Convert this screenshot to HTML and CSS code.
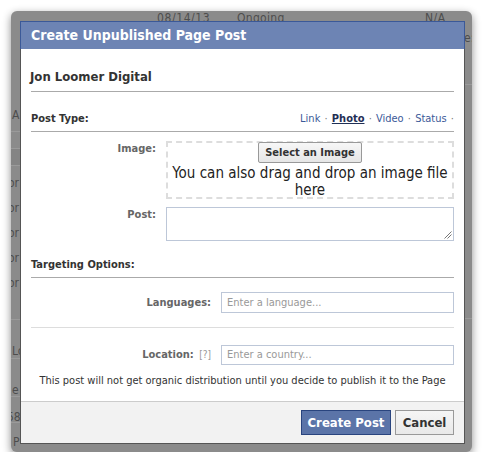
FILE: index.html
```html
<!DOCTYPE html>
<html>
<head>
<meta charset="utf-8">
<link rel="stylesheet" href="styles.css">
</head>
<body>
<div class="frame">
  <div class="behind">
    <div class="bg-line l1"></div>
    <div class="bg-line l2"></div>
    <div class="bg-band"></div>
    <div class="bg-line l3"></div>
    <div class="bg-line l4"></div>
    <div class="bg-line l5"></div>
    <div class="bg-line l6"></div>
    <div class="bg-line l7"></div>
    <div class="bg-line r1"></div>
    <div class="bg-line r2"></div>
    <span class="bg-t t1">08/14/13</span>
    <span class="bg-t t2">Ongoing</span>
    <span class="bg-t t3">N/A</span>
    <span class="bg-t t4">A</span>
    <span class="bg-t t5">or</span>
    <span class="bg-t t6">or</span>
    <span class="bg-t t7">or</span>
    <span class="bg-t t8">or</span>
    <span class="bg-t t9">or</span>
    <span class="bg-t t10">Lo</span>
    <span class="bg-t t11">e</span>
    <span class="bg-t t12">58</span>
    <span class="bg-t t13">P</span>
    <span class="bg-t t14">e:</span>
  </div>
  <div class="dialog">
    <div class="header">Create Unpublished Page Post</div>
    <div class="body">
      <div class="page-name">Jon Loomer Digital</div>
      <div class="section-head">
        <span>Post Type:</span>
        <span class="types"><a class="lnk">Link</a> <span class="dot">·</span> <a class="lnk cur">Photo</a> <span class="dot">·</span> <a class="lnk">Video</a> <span class="dot">·</span> <a class="lnk">Status</a> <span class="dot">·</span></span>
      </div>
      <div class="row row-image">
        <div class="label">Image:</div>
        <div class="drop">
          <button class="btn-select">Select an Image</button>
          <div class="drop-text">You can also drag and drop an image file here</div>
        </div>
      </div>
      <div class="row row-post">
        <div class="label">Post:</div>
        <div class="textarea"><svg class="grip" width="8" height="8" viewBox="0 0 8 8"><path d="M7.5 0.5L0.5 7.5M7.5 3.5L3.5 7.5" stroke="#777" stroke-width="1"/></svg></div>
      </div>
      <div class="section-head targeting"><span>Targeting Options:</span></div>
      <div class="row row-lang">
        <div class="label wide">Languages:</div>
        <div class="input">Enter a language...</div>
      </div>
      <div class="divider"></div>
      <div class="row row-loc">
        <div class="label wide">Location: <span class="help">[?]</span></div>
        <div class="input">Enter a country...</div>
      </div>
      <div class="note">This post will not get organic distribution until you decide to publish it to the Page</div>
    </div>
    <div class="footer">
      <button class="btn btn-primary">Create Post</button>
      <button class="btn btn-cancel">Cancel</button>
    </div>
  </div>
</div>
</body>
</html>
```
FILE: styles.css
```css
* { box-sizing: border-box; }
html, body { margin: 0; padding: 0; background: #fff; }
body { font-family: "DejaVu Sans Condensed", "DejaVu Sans", Verdana, sans-serif; color: #333; }

.frame {
  position: relative;
  margin: 11px 0 0 11px;
  width: 461px;
  height: 441px;
  background: #8b8b8b;
  border-radius: 6px;
  box-shadow: 0 3px 8px rgba(0,0,0,0.45);
  padding: 10px 7px 8px 9px;
}
.behind { position: absolute; inset: 0; overflow: hidden; border-radius: 6px; }
.bg-t { position: absolute; font-size: 12px; color: #4d4d4d; line-height: 12px; white-space: nowrap; }
.t1 { left: 146px; top: 1px; letter-spacing: 0.6px; }
.t2 { left: 226px; top: 1px; letter-spacing: 0.3px; }
.t3 { left: 414px; top: 1px; letter-spacing: 0.5px; }
.t4 { left: 1px; top: 98px; }
.t5 { left: -3px; top: 166px; }
.t6 { left: -3px; top: 191px; }
.t7 { left: -3px; top: 216px; }
.t8 { left: -3px; top: 241px; }
.t9 { left: -3px; top: 266px; }
.t10 { left: 1px; top: 334px; }
.t11 { left: 1px; top: 373px; }
.t12 { left: -4px; top: 400px; }
.t13 { left: 2px; top: 425px; }
.t14 { left: 453px; top: 21px; }
.bg-line { position: absolute; height: 1px; background: #9a9a9a; }
.l1 { left: 0; width: 10px; top: 120px; }
.l2 { left: 0; width: 10px; top: 137px; }
.bg-band { position: absolute; left: 0; width: 10px; top: 138px; height: 17px; background: #848484; }
.l3 { left: 0; width: 10px; top: 154px; }
.l4 { left: 0; width: 10px; top: 308px; }
.l5 { left: 0; width: 10px; top: 347px; }
.l6 { left: 0; width: 10px; top: 385px; }
.l7 { left: 0; width: 10px; top: 411px; }
.r1 { right: 0; width: 8px; top: 73px; }
.r2 { right: 0; width: 8px; top: 307px; }

.dialog {
  position: relative;
  width: 445px;
  height: 423px;
  border: 1px solid #555;
  border-top: none;
  background: #fff;
  display: flex;
  flex-direction: column;
}
.header {
  height: 28px;
  margin: 0 -1px;
  background: #6d84b4;
  border: 1px solid #3b5998;
  border-bottom: none;
  color: #fff;
  font-weight: bold;
  font-size: 14px;
  line-height: 27px;
  padding-left: 10px;
  white-space: nowrap;
}
.body { flex: 1; padding: 0 10px 0 10px; }

.page-name {
  margin-top: 20px;
  font-size: 13px;
  font-weight: bold;
  line-height: 16px;
  padding-bottom: 6px;
  border-bottom: 1px solid #aaa;
  text-indent: -1px;
}
.section-head {
  margin-top: 20px;
  display: flex;
  justify-content: space-between;
  font-size: 11px;
  font-weight: bold;
  line-height: 14px;
  padding-bottom: 5px;
  border-bottom: 1px solid #aaa;
}
.types { font-weight: normal; word-spacing: 1px; }
.lnk { color: #3b5998; }
.lnk.cur { font-weight: bold; text-decoration: underline; color: #1f2f55; }
.dot { color: #777; }

.row { display: flex; gap: 10px; }
.label {
  width: 125px;
  flex: none;
  text-align: right;
  font-size: 11px;
  font-weight: bold;
  color: #666;
  line-height: 14px;
  white-space: nowrap;
}
.label.wide { width: 180px; }
.help { font-weight: normal; color: #999; font-size: 10px; margin-left: 2px; }

.row-image { margin-top: 9px; }
.row-image .label { padding-top: 1px; }
.drop {
  flex: 1;
  height: 58px;
  border: 2px dashed #ddd;
  text-align: center;
}
.btn-select {
  display: block;
  margin: -1px auto 0;
  height: 21px;
  padding: 0 6px;
  font-family: inherit;
  font-size: 11px;
  font-weight: bold;
  color: #333;
  background: linear-gradient(#f7f7f7, #e6e6e6);
  border: 1px solid #999;
  border-radius: 2px;
  white-space: nowrap;
}
.drop-text { font-size: 15px; line-height: 17px; color: #222; margin-top: 2px; padding: 0 2px; }

.row-post { margin-top: 8px; }
.row-post .label { padding-top: 1px; }
.textarea {
  position: relative;
  flex: 1;
  height: 34px;
  border: 1px solid #bdc7d8;
}
.grip { position: absolute; right: 1px; bottom: 1px; }

.targeting { margin-top: 17px; }

.row-lang { margin-top: 14px; align-items: center; }
.input {
  flex: 1;
  height: 21px;
  border: 1px solid #bdc7d8;
  font-size: 11px;
  color: #999;
  line-height: 19px;
  padding-left: 5px;
}
.row-loc .input { height: 20px; line-height: 18px; }
.divider { margin-top: 14px; border-top: 1px solid #ddd; }
.row-loc { margin-top: 17px; align-items: center; }

.note {
  margin-top: 9px;
  text-align: center;
  font-size: 11px;
  line-height: 14px;
  color: #333;
  white-space: nowrap;
}

.footer {
  height: 42px;
  background: #f2f2f2;
  border-top: 1px solid #ccc;
  display: flex;
  justify-content: flex-end;
  align-items: flex-start;
  gap: 4px;
  padding: 8px 10px 0 0;
}
.btn {
  height: 25px;
  font-family: inherit;
  font-size: 13px;
  font-weight: bold;
  padding: 0;
  border-radius: 0;
  white-space: nowrap;
}
.btn-primary {
  background: #5b74a8;
  border: 1px solid #29447e;
  color: #fff;
  width: 90px;
}
.btn-cancel {
  background: linear-gradient(#f5f5f5, #e9e9e9);
  border: 1px solid #999;
  color: #333;
  width: 59px;
}
```
